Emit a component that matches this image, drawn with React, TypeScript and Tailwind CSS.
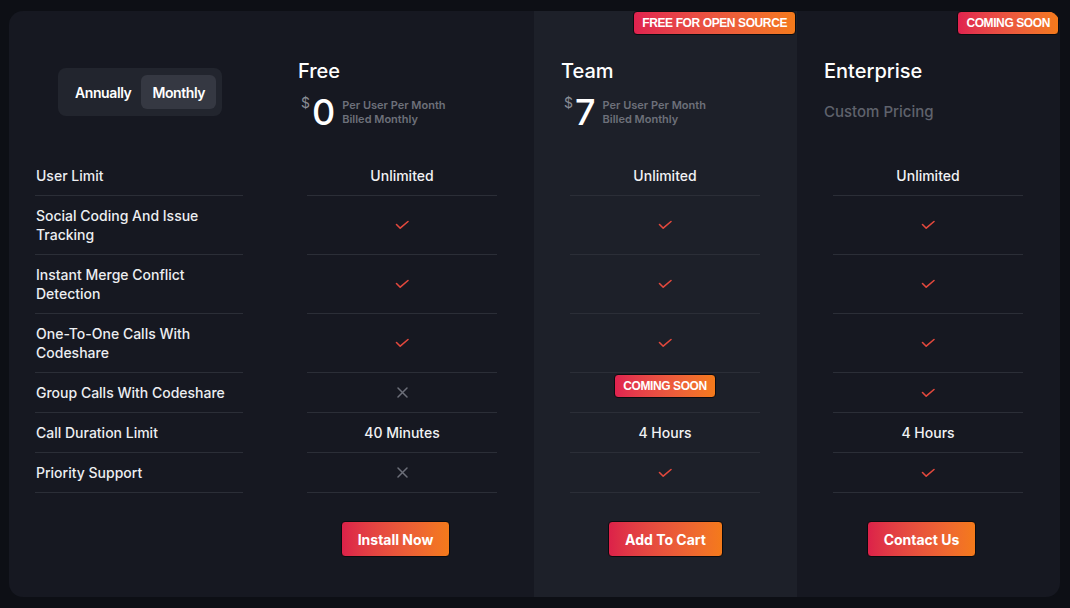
import * as React from "react";

const rowHeights = [
  "h-[41px]",
  "h-[59px]",
  "h-[59px]",
  "h-[59px]",
  "h-[40px]",
  "h-[40px]",
  "h-[40px]",
];

const features: React.ReactNode[] = [
  "User Limit",
  <>Social Coding And Issue<br />Tracking</>,
  <>Instant Merge Conflict<br />Detection</>,
  <>One-To-One Calls With<br />Codeshare</>,
  "Group Calls With Codeshare",
  "Call Duration Limit",
  "Priority Support",
];

type Cell = "check" | "cross" | "soon" | string;

interface Plan {
  name: string;
  price?: string;
  badge?: string;
  highlight?: boolean;
  cta: string;
  cells: Cell[];
}

const plans: Plan[] = [
  {
    name: "Free",
    price: "0",
    cta: "Install Now",
    cells: ["Unlimited", "check", "check", "check", "cross", "40 Minutes", "cross"],
  },
  {
    name: "Team",
    price: "7",
    badge: "FREE FOR OPEN SOURCE",
    highlight: true,
    cta: "Add To Cart",
    cells: ["Unlimited", "check", "check", "check", "soon", "4 Hours", "check"],
  },
  {
    name: "Enterprise",
    badge: "COMING SOON",
    cta: "Contact Us",
    cells: ["Unlimited", "check", "check", "check", "check", "4 Hours", "check"],
  },
];

const Check = () => (
  <svg width="15" height="10" viewBox="0 0 15 10" fill="none">
    <path d="M1.5 4.5 L5.2 8.2 L13 1.5" stroke="#e2483d" strokeWidth="1.6" strokeLinecap="round" strokeLinejoin="round" />
  </svg>
);

const Cross = () => (
  <svg width="11" height="11" viewBox="0 0 11 11" fill="none">
    <path d="M1 1 L10 10 M10 1 L1 10" stroke="#6c6f79" strokeWidth="1.5" strokeLinecap="round" />
  </svg>
);

const Badge = ({ children }: { children: React.ReactNode }) => (
  <span className="inline-flex h-[24px] items-center rounded-[4px] border border-[#0b0b0f] bg-linear-to-r from-[#e0224f] to-[#f47a1a] px-[8px] font-['Liberation_Sans',sans-serif] text-[12px] font-black tracking-[-0.4px] text-white">
    {children}
  </span>
);

function PlanColumn({ plan }: { plan: Plan }) {
  return (
    <div className={"relative flex flex-col " + (plan.highlight ? "bg-[#1d2029]" : "")}>
      {plan.badge && (
        <div className="absolute right-[1px] top-0 flex">
          <Badge>{plan.badge}</Badge>
        </div>
      )}
      <div className="h-[144px] pl-[27px] pt-[46px]">
        <div className="text-[20px] font-medium leading-7 text-white">{plan.name}</div>
        {plan.price ? (
          <div className="mt-[9px] flex items-start pl-[3px]">
            <span className="mt-[1px] text-[14px] leading-4 text-[#8a8d96]">$</span>
            <span className="ml-[2px] text-[36px] font-medium leading-none text-white">{plan.price}</span>
            <div className="ml-[7px] mt-[4px] text-[11px] font-semibold leading-[14px] text-[#6d707a]">
              <div>Per User Per Month</div>
              <div>Billed Monthly</div>
            </div>
          </div>
        ) : (
          <div className="mt-4 text-[15px] font-medium leading-[22px] text-[#5f626c]">Custom Pricing</div>
        )}
      </div>
      {plan.cells.map((cell, i) => (
        <div
          key={i}
          className={"ml-[36px] mr-[37px] flex items-center justify-center border-b border-[#2b2e37] text-[14px] font-medium text-[#f1f2f4] " + rowHeights[i]}
        >
          {cell === "check" ? (
            <Check />
          ) : cell === "cross" ? (
            <Cross />
          ) : cell === "soon" ? (
            <div className="mb-[13px] flex">
              <Badge>COMING SOON</Badge>
            </div>
          ) : (
            cell
          )}
        </div>
      ))}
      <div className={"mt-[28px] flex justify-center " + (plan.highlight ? "" : "pr-[14px]")}>
        <button className="h-[36px] rounded-[4px] border border-[#0b0b0f] bg-linear-to-r from-[#dc2149] to-[#f47a1a] px-4 text-[14px] font-bold text-white">
          {plan.cta}
        </button>
      </div>
    </div>
  );
}

export default function App() {
  return (
    <div className="h-[608px] w-[1070px] bg-[#0d0f15] pl-[9px] pt-[11px] font-['Inter',sans-serif]">
      <div className="grid h-[586px] w-[1051px] grid-cols-[262px_263px_263px_263px] overflow-hidden rounded-[14px] bg-[#161821]">
        <div className="flex flex-col">
          <div className="flex h-[144px] justify-center pt-[57px]">
            <div className="flex h-[48px] w-[164px] items-center rounded-lg bg-[#22252e] px-[7px]">
              <button className="h-[34px] rounded-md px-[10px] text-[14px] font-semibold tracking-[-0.4px] text-white">Annually</button>
              <button className="h-[34px] rounded-md bg-[#353842] px-[11px] text-[14px] font-semibold tracking-[-0.4px] text-white">Monthly</button>
            </div>
          </div>
          {features.map((f, i) => (
            <div
              key={i}
              className={"ml-[26px] mr-[28px] flex items-center border-b border-[#2b2e37] pl-[1px] text-[14px] font-medium leading-[19px] text-[#eceef1] " + rowHeights[i]}
            >
              <div>{f}</div>
            </div>
          ))}
        </div>
        {plans.map((p) => (
          <PlanColumn key={p.name} plan={p} />
        ))}
      </div>
    </div>
  );
}
